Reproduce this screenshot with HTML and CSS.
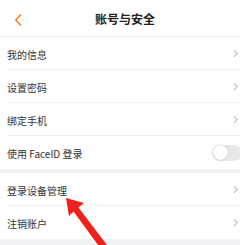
FILE: index.html
```html
<!DOCTYPE html>
<html lang="zh">
<head>
<meta charset="utf-8">
<link rel="stylesheet" href="styles.css">
</head>
<body>
<div class="page">
  <header class="header">
    <span class="back"><svg width="8" height="12" viewBox="0 0 8 12"><path d="M6.5 1 L1.8 6 L6.5 11" fill="none" stroke="#ef8a3c" stroke-width="1.8" stroke-linecap="round" stroke-linejoin="round"/></svg></span>
    <h1 class="title">账号与安全</h1>
  </header>
  <section class="group">
    <div class="row"><span class="label">我的信息</span><span class="chev"></span></div>
    <div class="row"><span class="label">设置密码</span><span class="chev"></span></div>
    <div class="row"><span class="label">绑定手机</span><span class="chev"></span></div>
    <div class="row last"><span class="label">使用 FaceID 登录</span><span class="toggle"><span class="knob"></span></span></div>
  </section>
  <section class="group">
    <div class="row"><span class="label">登录设备管理</span><span class="chev"></span></div>
    <div class="row last"><span class="label">注销账户</span><span class="chev"></span></div>
  </section>
  <svg class="arrow" width="60" height="60" viewBox="0 0 60 60">
    <path d="M4 3 L22 8 L16.5 12.5 L45 50 L39 54 L11.5 16.5 L7 21 Z" fill="#f0201c"/>
  </svg>
</div>
</body>
</html>
```
FILE: styles.css
```css
* { box-sizing: border-box; margin: 0; padding: 0; }
html, body { width: 240px; height: 245px; overflow: hidden; }
body {
  background: #f2f2f4;
  font-family: "Noto Sans CJK SC", "Noto Sans", sans-serif;
  color: #333;
}
.page { position: relative; width: 240px; height: 245px; }
.header {
  height: 37px;
  background: #fff;
  border-bottom: 1px solid #f0f0f0;
  display: flex;
  align-items: center;
  justify-content: center;
  position: relative;
}
.back { position: absolute; left: 14px; top: 14px; display: flex; }
.title { font-size: 12px; font-weight: 700; color: #222; margin-left: 10px; }
.group { background: #fff; padding-left: 7px; margin-bottom: 4px; }
.row {
  height: 33px;
  display: flex;
  align-items: center;
  justify-content: space-between;
  border-bottom: 1px solid #efefef;
  padding-right: 3px;
}
.row.last { border-bottom: none; }
.label { font-size: 10px; color: #333; padding-top: 2px; }
.chev {
  width: 4.5px; height: 4.5px;
  border-top: 1px solid #b8b8b8;
  border-right: 1px solid #b8b8b8;
  transform: rotate(45deg);
  margin-right: 1px;
}
.toggle {
  width: 30px; height: 16px;
  border-radius: 8px;
  background: #e8e8e8;
  margin-right: -5px;
  display: flex; align-items: center;
  padding-left: 1px;
}
.knob {
  width: 15px; height: 15px;
  border-radius: 50%;
  background: #fff;
  box-shadow: 0 0 1.5px rgba(0,0,0,0.3);
}
.arrow { position: absolute; left: 62px; top: 195px; }
```
